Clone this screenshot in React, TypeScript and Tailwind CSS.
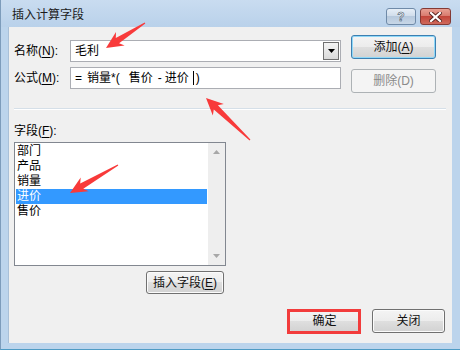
import React from 'react';

const font = "font-['Liberation_Sans','Noto_Sans_CJK_SC',sans-serif]";

type BtnProps = {
  children: React.ReactNode;
  className?: string;
  variant?: 'normal' | 'default' | 'disabled';
};

function WinButton({ children, className = '', variant = 'normal' }: BtnProps) {
  const look =
    variant === 'default'
      ? 'border-[#3c7fb1] shadow-[inset_0_0_0_1px_#8fd8f8] bg-[linear-gradient(#f4f4f4_0%,#ececec_50%,#dfdfdf_50%,#d2d2d2_100%)] text-[#111]'
      : variant === 'disabled'
      ? 'border-[#adb2b5] bg-[#f4f4f4] text-[#8a8a8a]'
      : 'border-[#707070] shadow-[inset_0_0_0_1px_#fbfbfb] bg-[linear-gradient(#f4f4f4_0%,#ececec_50%,#dfdfdf_50%,#d2d2d2_100%)] text-[#111]';
  return (
    <div
      className={`relative flex items-center justify-center rounded-[3px] border text-[12px] leading-[16px] ${look} ${className}`}
    >
      {children}
    </div>
  );
}

function Arrow({ x1, y1, x2, y2 }: { x1: number; y1: number; x2: number; y2: number }) {
  // tail (x1,y1) -> tip (x2,y2)
  const dx = x2 - x1;
  const dy = y2 - y1;
  const len = Math.hypot(dx, dy);
  const ux = dx / len;
  const uy = dy / len;
  const nx = -uy;
  const ny = ux;
  const head = 17;
  const wing = 8;
  const neck = 3;
  const tail = 0.6;
  const bx = x2 - ux * head * 0.8;
  const by = y2 - uy * head * 0.8;
  const cx = x2 - ux * head;
  const cy = y2 - uy * head;
  const pts = [
    [x1 + nx * tail, y1 + ny * tail],
    [bx + nx * neck, by + ny * neck],
    [cx + nx * wing, cy + ny * wing],
    [x2, y2],
    [cx - nx * wing, cy - ny * wing],
    [bx - nx * neck, by - ny * neck],
    [x1 - nx * tail, y1 - ny * tail],
  ]
    .map((p) => `${p[0].toFixed(1)},${p[1].toFixed(1)}`)
    .join(' ');
  return <polygon points={pts} fill="#f83a3a" />;
}

const fields = ['部门', '产品', '销量', '进价', '售价'];

export default function App() {
  return (
    <div className={`relative w-[460px] h-[352px] overflow-hidden bg-white ${font} text-[#000]`}>
      <div className="flex flex-col w-[460px] h-[350px] bg-[#bcd4ec] border-l border-b border-l-[#7d9cbb] border-b-[#4f9bc4]">
        {/* title bar */}
        <div className="flex h-[27px] shrink-0 bg-[linear-gradient(#c9dcf0,#b9d1ea)]">
          <span className="ml-[11px] mt-[7px] text-[12px] leading-[16px] text-[#1b1b1b]">插入计算字段</span>
          <div className="ml-auto mr-[9px] mt-[8px] flex gap-[4px]">
            <div className="flex h-[17px] w-[30px] items-center justify-center rounded-[3px] border border-[#6f8aa8] bg-[linear-gradient(#e6eef7_0%,#cfdcea_50%,#b7c9dd_50%,#c8d7e7_100%)]">
              <span className="text-[12px] font-bold leading-[12px] text-white [-webkit-text-stroke:0.6px_#44556a]">?</span>
            </div>
            <div className="flex h-[17px] w-[31px] items-center justify-center rounded-[3px] border border-[#843a35] bg-[linear-gradient(#e8a093_0%,#d7786b_50%,#c3463a_50%,#cf6a5c_100%)]">
              <svg width="13" height="10" viewBox="0 0 13 10">
                <path d="M2 1 L11 9 M11 1 L2 9" stroke="#5a2520" strokeWidth="4" strokeLinecap="square" />
                <path d="M2 1 L11 9 M11 1 L2 9" stroke="#ffffff" strokeWidth="2.2" strokeLinecap="square" />
              </svg>
            </div>
          </div>
        </div>

        <div className="flex flex-1">
          <div className="w-[7px] shrink-0" />
          {/* client area */}
          <div className="flex h-[316px] w-[444px] flex-col border-l border-[#a9c0d8] bg-[#f0f0f0] pl-[5px] pr-[7px]">
            <div className="flex">
              <div className="flex w-[327px] flex-col gap-[5px] pt-[13px]">
                <div className="flex h-[22px] items-center">
                  <span className="w-[56px] text-[12px] leading-[16px]">
                    名称(<span className="underline underline-offset-2">N</span>):
                  </span>
                  <div className="flex h-[22px] w-[271px] items-center border border-[#abadb3] bg-white">
                    <span className="flex-1 pl-[4px] text-[12px] leading-[16px]">毛利</span>
                    <div className="mr-[1px] flex h-[18px] w-[16px] items-center justify-center border border-[#707070] bg-[linear-gradient(#f4f4f4,#dadada)]">
                      <svg width="7" height="4" viewBox="0 0 7 4">
                        <path d="M0 0 H7 L3.5 4 Z" fill="#000" />
                      </svg>
                    </div>
                  </div>
                </div>
                <div className="flex h-[22px] items-center">
                  <span className="w-[56px] text-[12px] leading-[16px]">
                    公式(<span className="underline underline-offset-2">M</span>):
                  </span>
                  <div className="flex h-[22px] w-[271px] items-center border border-[#abadb3] bg-white pl-[4px] text-[12px] leading-[16px]">
                    <span>=</span>
                    <span className="ml-[5px]">销量*(</span>
                    <span className="ml-[9px]">售价</span>
                    <span className="ml-[5px]">-</span>
                    <span className="ml-[3px]">进价</span>
                    <span className="ml-[4px] h-[14px] w-px bg-black" />
                    <span className="ml-[2px]">)</span>
                  </div>
                </div>
              </div>
              <div className="ml-[10px] flex flex-col gap-[10px] pt-[8px]">
                <WinButton variant="default" className="h-[24px] w-[85px]">
                  添加(<span className="underline underline-offset-2">A</span>)
                </WinButton>
                <WinButton variant="disabled" className="h-[24px] w-[85px]">
                  删除(D)
                </WinButton>
              </div>
            </div>

            <div className="mt-[15px] h-[2px] w-[432px] border-t border-b border-t-[#d5dfe8] border-b-white" />

            <span className="mt-[13px] text-[12px] leading-[16px]">
              字段(<span className="underline underline-offset-2">F</span>):
            </span>

            <div className="mt-[3px] flex h-[124px] w-[212px] border border-[#828790] bg-white">
              <div className="ml-[1px] mt-[1px] flex w-[191px] flex-col">
                {fields.map((f, i) => (
                  <div
                    key={f}
                    className={`h-[15px] pl-[1px] text-[12px] leading-[15px] ${
                      i === 3 ? 'bg-[#3399ff] text-white' : ''
                    }`}
                  >
                    {f}
                  </div>
                ))}
              </div>
              <div className="ml-[1px] flex w-[17px] flex-col items-center justify-between bg-[#eeeeee] py-[7px]">
                <svg width="7" height="4" viewBox="0 0 7 4">
                  <path d="M0 4 H7 L3.5 0 Z" fill="#a7a7a7" />
                </svg>
                <svg width="7" height="4" viewBox="0 0 7 4">
                  <path d="M0 0 H7 L3.5 4 Z" fill="#a7a7a7" />
                </svg>
              </div>
            </div>

            <div className="flex w-[212px] justify-end pr-[2px]">
              <WinButton className="mt-[5px] h-[23px] w-[78px]">
                插入字段(<span className="underline underline-offset-2">E</span>)
              </WinButton>
            </div>

            <div className="mt-[15px] flex justify-end gap-[11px]">
              <WinButton className="h-[24px] w-[73px]">
                确定
                <span className="pointer-events-none absolute -left-[2px] -top-[1px] -right-[1px] -bottom-[2px] border-[3px] border-[#f23c3c]" />
              </WinButton>
              <WinButton className="h-[24px] w-[73px]">关闭</WinButton>
            </div>
          </div>
        </div>
      </div>

      <svg className="pointer-events-none absolute left-0 top-0" width="460" height="352">
        <Arrow x1={145} y1={23} x2={106} y2={48} />
        <Arrow x1={250} y1={140} x2={206} y2={98} />
        <Arrow x1={118} y1={165} x2={70} y2={193} />
      </svg>
    </div>
  );
}
